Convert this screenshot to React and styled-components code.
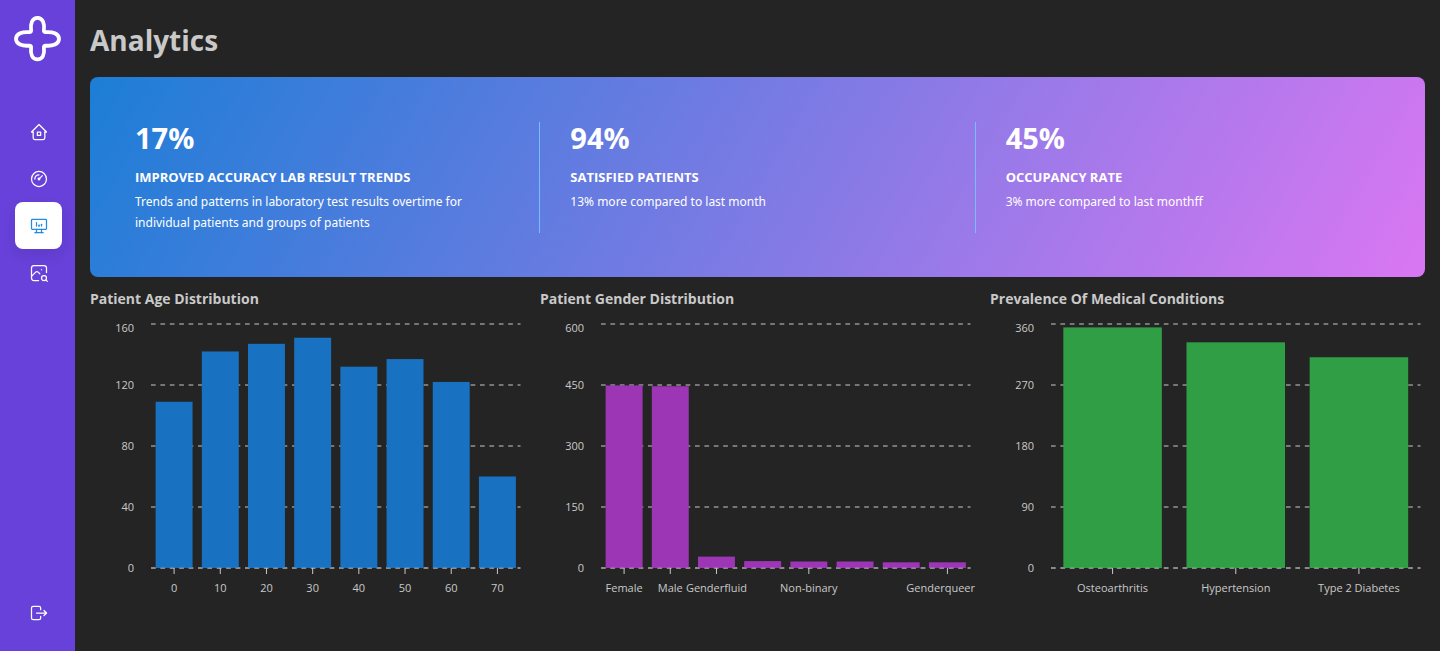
import React, { useState } from 'react';
import styled, { createGlobalStyle } from 'styled-components';
import {
  TbHome2,
  TbGauge,
  TbDeviceDesktopAnalytics,
  TbPhotoSearch,
  TbLogout,
} from 'react-icons/tb';

const GlobalStyle = createGlobalStyle`
  * {
    box-sizing: border-box;
  }

  body {
    margin: 0;
    background-color: #242424;
    color: #c9c9c9;
    font-family: 'Open Sans', 'Noto Sans', sans-serif;
    font-size: 14px;
  }
`;

const Layout = styled.div`
  display: flex;
  min-height: 100vh;
`;

const Sidebar = styled.nav`
  flex: 0 0 75px;
  display: flex;
  flex-direction: column;
  align-items: flex-start;
  padding: 15px 13px 15px 15px;
  background-color: #6741d9;
`;

const NavLinks = styled.div`
  flex: 1;
  display: flex;
  flex-direction: column;
  margin-top: 46px;
`;

const NavButton = styled.button`
  width: 47px;
  height: 47px;
  display: flex;
  align-items: center;
  justify-content: center;
  padding: 0;
  border: none;
  border-radius: 8px;
  cursor: pointer;
  color: ${(props) => (props.$active ? '#228be6' : 'white')};
  background-color: ${(props) => (props.$active ? 'white' : 'transparent')};
  box-shadow: ${(props) => (props.$active ? '0 6px 14px rgba(0, 0, 0, 0.08)' : 'none')};

  svg {
    width: 20px;
    height: 20px;
    stroke-width: 1.5;
  }
`;

const Main = styled.main`
  flex: 1;
  min-width: 0;
  padding: 15px;
`;

const PageTitle = styled.h1`
  margin: 0 0 12px;
  font-size: 28px;
  line-height: 50px;
  font-weight: 700;
`;

const StatsCard = styled.section`
  display: flex;
  padding: 45px 45px 44px;
  border-radius: 8px;
  color: white;
  background: linear-gradient(-60deg, #da77f2 0%, #1c7ed6 100%);
`;

const Stat = styled.div`
  flex: 1;

  & + & {
    margin-left: 30px;
    padding-left: 30px;
    border-left: 1px solid #74c0fc;
  }
`;

const StatValue = styled.div`
  font-size: 29px;
  line-height: 32px;
  font-weight: 700;
`;

const StatTitle = styled.div`
  margin-top: 12px;
  font-size: 13px;
  line-height: 22px;
  font-weight: 700;
  text-transform: uppercase;
`;

const StatText = styled.p`
  margin: 3px 0 0;
  font-family: 'Noto Sans', sans-serif;
  font-size: 12px;
  line-height: 21px;
`;

const Charts = styled.div`
  display: grid;
  grid-template-columns: repeat(3, 1fr);
  gap: 15px;
  margin-top: 10px;
`;

const ChartTitle = styled.h2`
  margin: 0 0 8px;
  font-size: 14px;
  line-height: 23px;
  font-weight: 700;
`;

const ChartSvg = styled.svg`
  display: block;
  width: 100%;
  overflow: visible;

  text {
    font-size: 11px;
    fill: #c9c9c9;
  }
`;

const LogoSvg = styled.svg`
  display: block;
  width: 47px;
  height: 47px;
  overflow: visible;
`;

const links = [
  { icon: TbHome2, label: 'Home' },
  { icon: TbGauge, label: 'Dashboard' },
  { icon: TbDeviceDesktopAnalytics, label: 'Analytics' },
  { icon: TbPhotoSearch, label: 'Imaging' },
];

const stats = [
  {
    value: '17%',
    title: 'Improved accuracy lab result trends',
    text: 'Trends and patterns in laboratory test results overtime for individual patients and groups of patients',
  },
  { value: '94%', title: 'Satisfied patients', text: '13% more compared to last month' },
  { value: '45%', title: 'Occupancy rate', text: '3% more compared to last monthff' },
];

const charts = [
  {
    title: 'Patient Age Distribution',
    color: '#1971c2',
    max: 160,
    data: [
      ['0', 109],
      ['10', 142],
      ['20', 147],
      ['30', 151],
      ['40', 132],
      ['50', 137],
      ['60', 122],
      ['70', 60],
    ],
  },
  {
    title: 'Patient Gender Distribution',
    color: '#9c36b5',
    max: 600,
    // bars without a name get no tick, their labels would overlap
    data: [
      ['Female', 449],
      ['Male', 447],
      ['Genderfluid', 28],
      ['', 17],
      ['Non-binary', 16],
      ['', 16],
      ['', 14],
      ['Genderqueer', 14],
    ],
  },
  {
    title: 'Prevalence Of Medical Conditions',
    color: '#2f9e44',
    max: 360,
    data: [
      ['Osteoarthritis', 355],
      ['Hypertension', 333],
      ['Type 2 Diabetes', 311],
    ],
  },
];

// Plot area inside the 435 x 281 chart
const WIDTH = 435;
const LEFT = 61;
const RIGHT = 430.5;
const TOP = 6;
const BOTTOM = 250;

function Logo() {
  return (
    <LogoSvg viewBox="1 0 47 47" fill="none" stroke="white" strokeWidth="3.8">
      <path d="M15.5 17.2 C16.6 17.2 17.2 16.600 17.1 15.500 C16.2 8.500 18.200 2.800 23.500 2.800 C28.800 2.800 30.800 8.500 29.900 15.500 C29.800 16.600 30.400 17.200 31.500 17.200 C38.500 16.400 45 18.800 45 23.900 C45 29 38.500 31.400 31.500 30.600 C30.400 30.600 29.800 31.200 29.900 32.300 C30.800 39.300 28.800 44.400 23.500 44.400 C18.200 44.400 16.200 39.300 17.100 32.300 C17.200 31.200 16.600 30.600 15.500 30.600 C8.500 31.400 2 29 2 23.900 C2 18.800 8.500 16.400 15.500 17.200 Z" />
    </LogoSvg>
  );
}

function BarChart({ title, color, max, data }) {
  const band = (RIGHT - LEFT) / data.length;
  const yOf = (value) => BOTTOM - (value / max) * (BOTTOM - TOP);
  const ticks = [0, 1, 2, 3, 4].map((i) => (max / 4) * i);

  return (
    <ChartSvg viewBox={`0 0 ${WIDTH} 281`} role="img" aria-label={title}>
      {ticks.map((tick) => (
        <g key={tick}>
          <line
            x1={LEFT}
            x2={RIGHT}
            y1={yOf(tick)}
            y2={yOf(tick)}
            stroke="#c9c9c9"
            strokeDasharray="4.7 4.7"
          />
          <text x="44" y={(tick === max ? yOf(tick) + 4 : yOf(tick)) + 4} textAnchor="end">
            {tick}
          </text>
        </g>
      ))}
      {data.map(([name, value], i) => {
        const center = LEFT + band * (i + 0.5);
        // a long last label is held inside the chart
        const overflows = center + name.length * 3 > WIDTH;
        return (
          <g key={i}>
            <rect
              x={center - band * 0.4}
              y={yOf(value)}
              width={band * 0.8}
              height={BOTTOM - yOf(value)}
              fill={color}
            />
            {name && (
              <>
                <line x1={center} x2={center} y1={BOTTOM} y2={BOTTOM + 6} stroke="#c9c9c9" />
                <text
                  x={overflows ? WIDTH : center}
                  y={BOTTOM + 24}
                  textAnchor={overflows ? 'end' : 'middle'}
                >
                  {name}
                </text>
              </>
            )}
          </g>
        );
      })}
      <line
        x1={LEFT}
        x2={RIGHT}
        y1={BOTTOM}
        y2={BOTTOM}
        stroke="#c9c9c9"
        strokeOpacity="0.5"
        strokeDasharray="4.7 4.7"
      />
    </ChartSvg>
  );
}

function App() {
  const [active, setActive] = useState('Analytics');

  return (
    <>
      <GlobalStyle />
      <Layout>
        <Sidebar>
          <Logo />
          <NavLinks>
            {links.map(({ icon: Icon, label }) => (
              <NavButton
                key={label}
                type="button"
                aria-label={label}
                $active={label === active}
                onClick={() => setActive(label)}
              >
                <Icon />
              </NavButton>
            ))}
          </NavLinks>
          <NavButton type="button" aria-label="Logout">
            <TbLogout />
          </NavButton>
        </Sidebar>
        <Main>
          <PageTitle>Analytics</PageTitle>
          <StatsCard>
            {stats.map((stat) => (
              <Stat key={stat.title}>
                <StatValue>{stat.value}</StatValue>
                <StatTitle>{stat.title}</StatTitle>
                <StatText>{stat.text}</StatText>
              </Stat>
            ))}
          </StatsCard>
          <Charts>
            {charts.map((chart) => (
              <section key={chart.title}>
                <ChartTitle>{chart.title}</ChartTitle>
                <BarChart {...chart} />
              </section>
            ))}
          </Charts>
        </Main>
      </Layout>
    </>
  );
}

export default App;
